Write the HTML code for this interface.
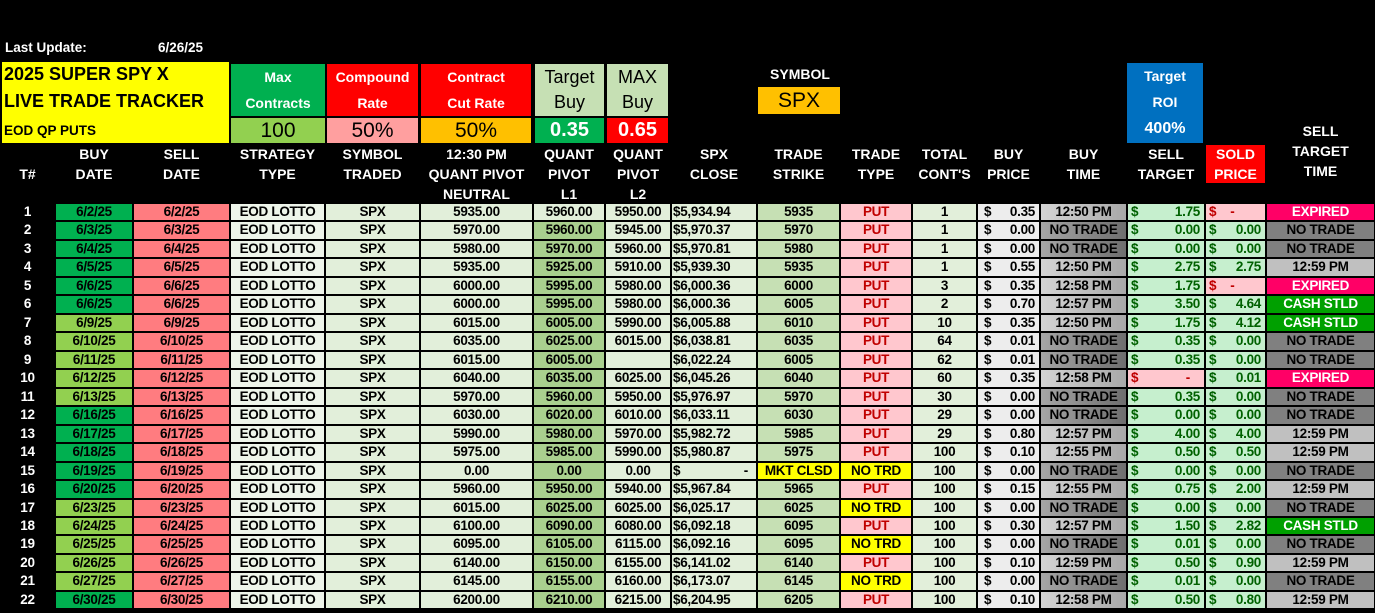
<!DOCTYPE html>
<html><head><meta charset="utf-8"><style>
*{margin:0;padding:0;box-sizing:border-box}
body{width:1375px;height:613px;background:#000;overflow:hidden;position:relative;font-family:"Liberation Sans",Arial,sans-serif;color:#000}
.a{position:absolute}
.w{color:#fff;font-weight:bold;font-size:14px}
.hb{position:absolute;text-align:center;display:flex;align-items:center;justify-content:center}
.hd{position:absolute;top:144px;color:#fff;font-weight:bold;font-size:14px;text-align:center;line-height:20px}
#g{position:absolute;left:0;top:203px;display:grid;grid-template-columns:55px 78px 97px 95px 95px 113px 72px 66px 86px 83px 72px 65px 63px 87px 78px 61px 109px;grid-auto-rows:18.48px}
#g>div{margin:1px;font-size:13.5px;font-weight:bold;letter-spacing:-0.3px;line-height:16px;text-align:center;white-space:nowrap;overflow:hidden}
.n{color:#fff;background:#000}
.bd{background:#00b050}.bl{background:#92d050}
.sd{background:#ff7c80}
.st{background:#eef5ea}
.sy{background:#e2efda}
.nu{background:#e2efda}
.l1{background:#a9d08e}
.cl{background:#e2efda;text-align:left!important;padding-left:1px}
.sk{background:#c6e0b4}
.pt{background:#ffc7ce;color:#c00000}
.nt{background:#ffff00}
.bp{background:#ededed;display:flex;justify-content:space-between;padding:0 4px 0 6px}
.t{background:linear-gradient(90deg,#d4d4d4,#a8a8a8)}
.x{background:linear-gradient(90deg,#a6a6a6,#6e6e6e)}
.tg{background:#c6efce;color:#006100;display:flex;justify-content:space-between;padding:0 4px 0 3px}
.pk{background:#ffc7ce;color:#c00000;display:flex;justify-content:flex-start;gap:14px;padding:0 3px}
.pk2{background:#ffc7ce;color:#c00000;display:flex;justify-content:space-between;padding:0 14px 0 3px}
.sp{background:#c6efce;color:#006100;display:flex;justify-content:space-between;padding:0 4px 0 3px}
.ex{background:#ff0066;color:#fff}
.cs{background:#00a000;color:#fff}
.tn{background:#808080}
.tt{background:#c0c0c0}
</style></head><body>
<div class="a w" style="left:5px;top:40px;font-size:13.5px">Last Update:</div>
<div class="a w" style="left:158px;top:40px;font-size:13.5px">6/26/25</div>
<div class="a" style="left:2px;top:62px;width:227px;height:81px;background:#ffff00"></div>
<div class="a" style="left:4px;top:64px;font-weight:bold;font-size:18px">2025 SUPER SPY X</div>
<div class="a" style="left:4px;top:91px;font-weight:bold;font-size:18px">LIVE TRADE TRACKER</div>
<div class="a" style="left:4px;top:123px;font-size:13.5px;font-weight:bold">EOD QP PUTS</div>

<div class="hb w" style="left:231px;top:64px;width:94px;height:52px;background:#00b050;flex-direction:column;gap:10px"><span>Max</span><span>Contracts</span></div>
<div class="hb" style="left:231px;top:118px;width:94px;height:25px;background:#92d050;font-size:21px">100</div>
<div class="hb w" style="left:327px;top:64px;width:91px;height:52px;background:#ff0000;flex-direction:column;gap:10px"><span>Compound</span><span>Rate</span></div>
<div class="hb" style="left:327px;top:118px;width:91px;height:25px;background:#ff9f9f;font-size:21px">50%</div>
<div class="hb w" style="left:421px;top:64px;width:110px;height:52px;background:#ff0000;flex-direction:column;gap:10px"><span>Contract</span><span>Cut Rate</span></div>
<div class="hb" style="left:421px;top:118px;width:110px;height:25px;background:#ffc000;font-size:21px">50%</div>
<div class="hb" style="left:535px;top:64px;width:69px;height:52px;background:#c6e0b4;flex-direction:column;gap:4px;font-size:18px"><span>Target</span><span>Buy</span></div>
<div class="hb" style="left:535px;top:118px;width:69px;height:25px;background:#00b050;color:#fff;font-weight:bold;font-size:20px">0.35</div>
<div class="hb" style="left:607px;top:64px;width:61px;height:52px;background:#c6e0b4;flex-direction:column;gap:4px;font-size:18px"><span>MAX</span><span>Buy</span></div>
<div class="hb" style="left:607px;top:118px;width:61px;height:25px;background:#ff0000;color:#fff;font-weight:bold;font-size:20px">0.65</div>
<div class="a w" style="left:758px;top:66px;width:84px;text-align:center">SYMBOL</div>
<div class="hb" style="left:758px;top:87px;width:82px;height:27px;background:#ffc000;font-size:21px">SPX</div>
<div class="hb w" style="left:1127px;top:63px;width:76px;height:80px;background:#0070c0;flex-direction:column;gap:10px"><span>Target</span><span>ROI</span><span style="font-size:16px">400%</span></div>
<div class="a" style="left:1206px;top:145px;width:59px;height:38px;background:#ff0000"></div>

<div class="hd" style="left:0;width:55px;top:164px">T#</div>
<div class="hd" style="left:55px;width:78px">BUY<br>DATE</div>
<div class="hd" style="left:133px;width:97px">SELL<br>DATE</div>
<div class="hd" style="left:230px;width:95px">STRATEGY<br>TYPE</div>
<div class="hd" style="left:325px;width:95px">SYMBOL<br>TRADED</div>
<div class="hd" style="left:420px;width:113px">12:30 PM<br>QUANT PIVOT<br>NEUTRAL</div>
<div class="hd" style="left:533px;width:72px">QUANT<br>PIVOT<br>L1</div>
<div class="hd" style="left:605px;width:66px">QUANT<br>PIVOT<br>L2</div>
<div class="hd" style="left:671px;width:86px">SPX<br>CLOSE</div>
<div class="hd" style="left:757px;width:83px">TRADE<br>STRIKE</div>
<div class="hd" style="left:840px;width:72px">TRADE<br>TYPE</div>
<div class="hd" style="left:912px;width:65px">TOTAL<br>CONT'S</div>
<div class="hd" style="left:977px;width:63px">BUY<br>PRICE</div>
<div class="hd" style="left:1040px;width:87px">BUY<br>TIME</div>
<div class="hd" style="left:1127px;width:78px">SELL<br>TARGET</div>
<div class="hd" style="left:1205px;width:61px">SOLD<br>PRICE</div>
<div class="hd" style="left:1266px;width:109px;top:121px">SELL<br>TARGET<br>TIME</div>

<div id="g">
<div class="n">1</div><div class="bd">6/2/25</div><div class="sd">6/2/25</div><div class="st">EOD LOTTO</div><div class="sy">SPX</div><div class="nu">5935.00</div><div class="nu">5960.00</div><div class="nu">5950.00</div><div class="cl">$5,934.94</div><div class="sk">5935</div><div class="pt">PUT</div><div class="nu">1</div><div class="bp"><span>$</span><span>0.35</span></div><div class="t">12:50 PM</div><div class="tg"><span>$</span><span>1.75</span></div><div class="pk"><span>$</span><span>-</span></div><div class="ex">EXPIRED</div>
<div class="n">2</div><div class="bd">6/3/25</div><div class="sd">6/3/25</div><div class="st">EOD LOTTO</div><div class="sy">SPX</div><div class="nu">5970.00</div><div class="l1">5960.00</div><div class="nu">5945.00</div><div class="cl">$5,970.37</div><div class="sk">5970</div><div class="pt">PUT</div><div class="nu">1</div><div class="bp"><span>$</span><span>0.00</span></div><div class="x">NO TRADE</div><div class="tg"><span>$</span><span>0.00</span></div><div class="sp"><span>$</span><span>0.00</span></div><div class="tn">NO TRADE</div>
<div class="n">3</div><div class="bd">6/4/25</div><div class="sd">6/4/25</div><div class="st">EOD LOTTO</div><div class="sy">SPX</div><div class="nu">5980.00</div><div class="l1">5970.00</div><div class="nu">5960.00</div><div class="cl">$5,970.81</div><div class="sk">5980</div><div class="pt">PUT</div><div class="nu">1</div><div class="bp"><span>$</span><span>0.00</span></div><div class="x">NO TRADE</div><div class="tg"><span>$</span><span>0.00</span></div><div class="sp"><span>$</span><span>0.00</span></div><div class="tn">NO TRADE</div>
<div class="n">4</div><div class="bd">6/5/25</div><div class="sd">6/5/25</div><div class="st">EOD LOTTO</div><div class="sy">SPX</div><div class="nu">5935.00</div><div class="l1">5925.00</div><div class="nu">5910.00</div><div class="cl">$5,939.30</div><div class="sk">5935</div><div class="pt">PUT</div><div class="nu">1</div><div class="bp"><span>$</span><span>0.55</span></div><div class="t">12:50 PM</div><div class="tg"><span>$</span><span>2.75</span></div><div class="sp"><span>$</span><span>2.75</span></div><div class="tt">12:59 PM</div>
<div class="n">5</div><div class="bd">6/6/25</div><div class="sd">6/6/25</div><div class="st">EOD LOTTO</div><div class="sy">SPX</div><div class="nu">6000.00</div><div class="l1">5995.00</div><div class="nu">5980.00</div><div class="cl">$6,000.36</div><div class="sk">6000</div><div class="pt">PUT</div><div class="nu">3</div><div class="bp"><span>$</span><span>0.35</span></div><div class="t">12:58 PM</div><div class="tg"><span>$</span><span>1.75</span></div><div class="pk"><span>$</span><span>-</span></div><div class="ex">EXPIRED</div>
<div class="n">6</div><div class="bd">6/6/25</div><div class="sd">6/6/25</div><div class="st">EOD LOTTO</div><div class="sy">SPX</div><div class="nu">6000.00</div><div class="l1">5995.00</div><div class="nu">5980.00</div><div class="cl">$6,000.36</div><div class="sk">6005</div><div class="pt">PUT</div><div class="nu">2</div><div class="bp"><span>$</span><span>0.70</span></div><div class="t">12:57 PM</div><div class="tg"><span>$</span><span>3.50</span></div><div class="sp"><span>$</span><span>4.64</span></div><div class="cs">CASH STLD</div>
<div class="n">7</div><div class="bl">6/9/25</div><div class="sd">6/9/25</div><div class="st">EOD LOTTO</div><div class="sy">SPX</div><div class="nu">6015.00</div><div class="l1">6005.00</div><div class="nu">5990.00</div><div class="cl">$6,005.88</div><div class="sk">6010</div><div class="pt">PUT</div><div class="nu">10</div><div class="bp"><span>$</span><span>0.35</span></div><div class="t">12:50 PM</div><div class="tg"><span>$</span><span>1.75</span></div><div class="sp"><span>$</span><span>4.12</span></div><div class="cs">CASH STLD</div>
<div class="n">8</div><div class="bl">6/10/25</div><div class="sd">6/10/25</div><div class="st">EOD LOTTO</div><div class="sy">SPX</div><div class="nu">6035.00</div><div class="l1">6025.00</div><div class="nu">6015.00</div><div class="cl">$6,038.81</div><div class="sk">6035</div><div class="pt">PUT</div><div class="nu">64</div><div class="bp"><span>$</span><span>0.01</span></div><div class="x">NO TRADE</div><div class="tg"><span>$</span><span>0.35</span></div><div class="sp"><span>$</span><span>0.00</span></div><div class="tn">NO TRADE</div>
<div class="n">9</div><div class="bl">6/11/25</div><div class="sd">6/11/25</div><div class="st">EOD LOTTO</div><div class="sy">SPX</div><div class="nu">6015.00</div><div class="l1">6005.00</div><div class="nu"></div><div class="cl">$6,022.24</div><div class="sk">6005</div><div class="pt">PUT</div><div class="nu">62</div><div class="bp"><span>$</span><span>0.01</span></div><div class="x">NO TRADE</div><div class="tg"><span>$</span><span>0.35</span></div><div class="sp"><span>$</span><span>0.00</span></div><div class="tn">NO TRADE</div>
<div class="n">10</div><div class="bl">6/12/25</div><div class="sd">6/12/25</div><div class="st">EOD LOTTO</div><div class="sy">SPX</div><div class="nu">6040.00</div><div class="l1">6035.00</div><div class="nu">6025.00</div><div class="cl">$6,045.26</div><div class="sk">6040</div><div class="pt">PUT</div><div class="nu">60</div><div class="bp"><span>$</span><span>0.35</span></div><div class="t">12:58 PM</div><div class="pk2"><span>$</span><span>-</span></div><div class="sp"><span>$</span><span>0.01</span></div><div class="ex">EXPIRED</div>
<div class="n">11</div><div class="bl">6/13/25</div><div class="sd">6/13/25</div><div class="st">EOD LOTTO</div><div class="sy">SPX</div><div class="nu">5970.00</div><div class="l1">5960.00</div><div class="nu">5950.00</div><div class="cl">$5,976.97</div><div class="sk">5970</div><div class="pt">PUT</div><div class="nu">30</div><div class="bp"><span>$</span><span>0.00</span></div><div class="x">NO TRADE</div><div class="tg"><span>$</span><span>0.35</span></div><div class="sp"><span>$</span><span>0.00</span></div><div class="tn">NO TRADE</div>
<div class="n">12</div><div class="bd">6/16/25</div><div class="sd">6/16/25</div><div class="st">EOD LOTTO</div><div class="sy">SPX</div><div class="nu">6030.00</div><div class="l1">6020.00</div><div class="nu">6010.00</div><div class="cl">$6,033.11</div><div class="sk">6030</div><div class="pt">PUT</div><div class="nu">29</div><div class="bp"><span>$</span><span>0.00</span></div><div class="x">NO TRADE</div><div class="tg"><span>$</span><span>0.00</span></div><div class="sp"><span>$</span><span>0.00</span></div><div class="tn">NO TRADE</div>
<div class="n">13</div><div class="bd">6/17/25</div><div class="sd">6/17/25</div><div class="st">EOD LOTTO</div><div class="sy">SPX</div><div class="nu">5990.00</div><div class="l1">5980.00</div><div class="nu">5970.00</div><div class="cl">$5,982.72</div><div class="sk">5985</div><div class="pt">PUT</div><div class="nu">29</div><div class="bp"><span>$</span><span>0.80</span></div><div class="t">12:57 PM</div><div class="tg"><span>$</span><span>4.00</span></div><div class="sp"><span>$</span><span>4.00</span></div><div class="tt">12:59 PM</div>
<div class="n">14</div><div class="bd">6/18/25</div><div class="sd">6/18/25</div><div class="st">EOD LOTTO</div><div class="sy">SPX</div><div class="nu">5975.00</div><div class="l1">5985.00</div><div class="nu">5990.00</div><div class="cl">$5,980.87</div><div class="sk">5975</div><div class="pt">PUT</div><div class="nu">100</div><div class="bp"><span>$</span><span>0.10</span></div><div class="t">12:55 PM</div><div class="tg"><span>$</span><span>0.50</span></div><div class="sp"><span>$</span><span>0.50</span></div><div class="tt">12:59 PM</div>
<div class="n">15</div><div class="bd">6/19/25</div><div class="sd">6/19/25</div><div class="st">EOD LOTTO</div><div class="sy">SPX</div><div class="nu">0.00</div><div class="l1">0.00</div><div class="nu">0.00</div><div class="cl" style="display:flex;justify-content:space-between;padding:0 8px 0 1px"><span>$</span><span>-</span></div><div class="nt">MKT CLSD</div><div class="nt">NO TRD</div><div class="nu">100</div><div class="bp"><span>$</span><span>0.00</span></div><div class="x">NO TRADE</div><div class="tg"><span>$</span><span>0.00</span></div><div class="sp"><span>$</span><span>0.00</span></div><div class="tn">NO TRADE</div>
<div class="n">16</div><div class="bd">6/20/25</div><div class="sd">6/20/25</div><div class="st">EOD LOTTO</div><div class="sy">SPX</div><div class="nu">5960.00</div><div class="l1">5950.00</div><div class="nu">5940.00</div><div class="cl">$5,967.84</div><div class="sk">5965</div><div class="pt">PUT</div><div class="nu">100</div><div class="bp"><span>$</span><span>0.15</span></div><div class="t">12:55 PM</div><div class="tg"><span>$</span><span>0.75</span></div><div class="sp"><span>$</span><span>2.00</span></div><div class="tt">12:59 PM</div>
<div class="n">17</div><div class="bl">6/23/25</div><div class="sd">6/23/25</div><div class="st">EOD LOTTO</div><div class="sy">SPX</div><div class="nu">6015.00</div><div class="l1">6025.00</div><div class="nu">6025.00</div><div class="cl">$6,025.17</div><div class="sk">6025</div><div class="nt">NO TRD</div><div class="nu">100</div><div class="bp"><span>$</span><span>0.00</span></div><div class="x">NO TRADE</div><div class="tg"><span>$</span><span>0.00</span></div><div class="sp"><span>$</span><span>0.00</span></div><div class="tn">NO TRADE</div>
<div class="n">18</div><div class="bl">6/24/25</div><div class="sd">6/24/25</div><div class="st">EOD LOTTO</div><div class="sy">SPX</div><div class="nu">6100.00</div><div class="l1">6090.00</div><div class="nu">6080.00</div><div class="cl">$6,092.18</div><div class="sk">6095</div><div class="pt">PUT</div><div class="nu">100</div><div class="bp"><span>$</span><span>0.30</span></div><div class="t">12:57 PM</div><div class="tg"><span>$</span><span>1.50</span></div><div class="sp"><span>$</span><span>2.82</span></div><div class="cs">CASH STLD</div>
<div class="n">19</div><div class="bl">6/25/25</div><div class="sd">6/25/25</div><div class="st">EOD LOTTO</div><div class="sy">SPX</div><div class="nu">6095.00</div><div class="l1">6105.00</div><div class="nu">6115.00</div><div class="cl">$6,092.16</div><div class="sk">6095</div><div class="nt">NO TRD</div><div class="nu">100</div><div class="bp"><span>$</span><span>0.00</span></div><div class="x">NO TRADE</div><div class="tg"><span>$</span><span>0.01</span></div><div class="sp"><span>$</span><span>0.00</span></div><div class="tn">NO TRADE</div>
<div class="n">20</div><div class="bl">6/26/25</div><div class="sd">6/26/25</div><div class="st">EOD LOTTO</div><div class="sy">SPX</div><div class="nu">6140.00</div><div class="l1">6150.00</div><div class="nu">6155.00</div><div class="cl">$6,141.02</div><div class="sk">6140</div><div class="pt">PUT</div><div class="nu">100</div><div class="bp"><span>$</span><span>0.10</span></div><div class="t">12:59 PM</div><div class="tg"><span>$</span><span>0.50</span></div><div class="sp"><span>$</span><span>0.90</span></div><div class="tt">12:59 PM</div>
<div class="n">21</div><div class="bl">6/27/25</div><div class="sd">6/27/25</div><div class="st">EOD LOTTO</div><div class="sy">SPX</div><div class="nu">6145.00</div><div class="l1">6155.00</div><div class="nu">6160.00</div><div class="cl">$6,173.07</div><div class="sk">6145</div><div class="nt">NO TRD</div><div class="nu">100</div><div class="bp"><span>$</span><span>0.00</span></div><div class="x">NO TRADE</div><div class="tg"><span>$</span><span>0.01</span></div><div class="sp"><span>$</span><span>0.00</span></div><div class="tn">NO TRADE</div>
<div class="n">22</div><div class="bd">6/30/25</div><div class="sd">6/30/25</div><div class="st">EOD LOTTO</div><div class="sy">SPX</div><div class="nu">6200.00</div><div class="l1">6210.00</div><div class="nu">6215.00</div><div class="cl">$6,204.95</div><div class="sk">6205</div><div class="pt">PUT</div><div class="nu">100</div><div class="bp"><span>$</span><span>0.10</span></div><div class="t">12:58 PM</div><div class="tg"><span>$</span><span>0.50</span></div><div class="sp"><span>$</span><span>0.80</span></div><div class="tt">12:59 PM</div>
</div>
</body></html>
